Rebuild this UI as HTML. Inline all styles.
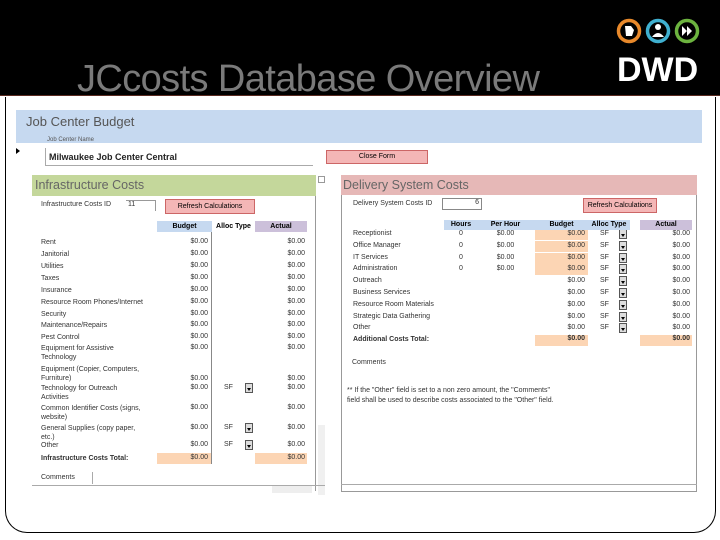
<!DOCTYPE html>
<html><head><meta charset="utf-8"><style>
*{margin:0;padding:0;box-sizing:border-box}
body{width:720px;height:540px;position:relative;background:#fff;font-family:"Liberation Sans",sans-serif;overflow:hidden}
.a{position:absolute;white-space:nowrap}
.s{font-size:7px;color:#333}
.r{text-align:right}
.c{text-align:center}
.dd{position:absolute;width:8px;height:10px;border:1px solid #555;background:#ddd}
.dd:after{content:"";position:absolute;left:1px;top:4px;border-left:2px solid transparent;border-right:2px solid transparent;border-top:3px solid #000}
</style></head><body>
<div class="a" style="left:0;top:0;width:720px;height:96px;background:#000;border-bottom:1px solid #5a2a20"></div>
<div class="a" style="left:77px;top:58px;font-size:38px;color:#7a7a7a;letter-spacing:-0.6px">JCcosts Database Overview</div>
<!-- logo -->
<svg class="a" style="left:616px;top:16px" width="86" height="68" viewBox="0 0 86 68">
<circle cx="13" cy="15" r="10.5" fill="none" stroke="#e8892b" stroke-width="3.5"/>
<circle cx="42" cy="15" r="10.5" fill="none" stroke="#3fb0d0" stroke-width="3.5"/>
<circle cx="71" cy="15" r="10.5" fill="none" stroke="#6cb33f" stroke-width="3.5"/>
<path d="M9 10h6l3 4-2 6h-6z" fill="#fff"/>
<circle cx="42" cy="11" r="3" fill="#fff"/><path d="M36 21q6-8 12 0z" fill="#fff"/>
<path d="M66 10l5 5-5 5zM71 10l5 5-5 5z" fill="#fff"/>
<text x="1" y="65" font-family="Liberation Sans" font-weight="bold" font-size="34" fill="#fff">DWD</text>
</svg>
<!-- frame -->
<div class="a" style="left:5px;top:97px;width:711px;height:436px;border-left:1px solid #000;border-bottom:1px solid #000;border-right:1px solid #000;border-radius:0 0 22px 22px;border-top:none"></div>
<div class="a" style="left:16px;top:110px;width:686px;height:33px;background:#c6d9f0"></div>
<div class="a" style="left:26px;top:114px;font-size:13px;color:#555">Job Center Budget</div>
<div class="a s" style="left:47px;top:137px;font-size:6px;color:#555">Job Center Name</div>
<div class="a" style="left:16px;top:148px;border-left:4px solid #000;border-top:3px solid transparent;border-bottom:3px solid transparent"></div>
<div class="a" style="left:45px;top:148px;width:268px;height:18px;border-left:1px solid #aaa;border-bottom:1px solid #aaa"></div>
<div class="a" style="left:49px;top:152px;font-size:9px;font-weight:bold;color:#222">Milwaukee Job Center Central</div>
<div class="a c" style="left:326px;top:150px;width:102px;height:14px;background:#f4b6b6;border:1px solid #c66;font-size:7px;line-height:12px">Close Form</div>
<!-- infrastructure -->
<div class="a" style="left:32px;top:175px;width:284px;height:316px;border-right:1px solid #999"></div>
<div class="a" style="left:32px;top:175px;width:284px;height:21px;background:#c4d79b"></div>
<div class="a" style="left:35px;top:178px;font-size:12.5px;color:#666">Infrastructure Costs</div>
<div class="a" style="left:318px;top:176px;width:7px;height:7px;border:1px solid #999"></div>
<div class="a s" style="left:41px;top:201px">Infrastructure Costs ID</div>
<div class="a s" style="left:126px;top:200px;width:30px;height:11px;border-top:1px solid #999;border-right:1px solid #999;padding-left:2px">11</div>
<div class="a c" style="left:165px;top:199px;width:90px;height:15px;background:#f4b6b6;border:1px solid #c66;font-size:7px;line-height:13px">Refresh Calculations</div>
<div class="a c" style="left:157px;top:221px;width:55px;height:11px;background:#c6d9f0;font-size:7px;font-weight:bold;line-height:11px">Budget</div>
<div class="a c" style="left:212px;top:221px;width:43px;height:11px;font-size:7px;font-weight:bold;line-height:11px">Alloc Type</div>
<div class="a c" style="left:255px;top:221px;width:52px;height:11px;background:#ccc0da;font-size:7px;font-weight:bold;line-height:11px">Actual</div>
<div class="a" style="left:211px;top:232px;width:1px;height:232px;background:#888"></div>
<div class="a" style="left:157px;top:453px;width:54px;height:11px;background:#fcd5b4"></div>
<div class="a" style="left:255px;top:453px;width:52px;height:11px;background:#fcd5b4"></div>
<div id="inf"></div>
<div class="a" style="left:318px;top:425px;width:7px;height:70px;background:#f0f0f0"></div>
<div class="a s" style="left:41px;top:474px">Comments</div>
<div class="a" style="left:92px;top:472px;width:1px;height:12px;background:#aaa"></div>
<div class="a" style="left:32px;top:485px;width:293px;height:8px;border-top:1px solid #aaa"></div>
<div class="a" style="left:272px;top:486px;width:40px;height:7px;background:#eee"></div>
<!-- delivery -->
<div class="a" style="left:341px;top:175px;width:356px;height:317px;border-left:1px solid #999;border-right:1px solid #999;border-bottom:1px solid #999"></div>
<div class="a" style="left:341px;top:175px;width:356px;height:20px;background:#e6b8b7"></div>
<div class="a" style="left:343px;top:178px;font-size:12.5px;color:#666">Delivery System Costs</div>
<div class="a s" style="left:353px;top:200px">Delivery System Costs ID</div>
<div class="a s r" style="left:442px;top:198px;width:40px;height:12px;border:1px solid #888;padding-right:2px">6</div>
<div class="a c" style="left:583px;top:198px;width:74px;height:15px;background:#f4b6b6;border:1px solid #c66;font-size:7px;line-height:13px">Refresh Calculations</div>
<div class="a" style="left:444px;top:220px;width:186px;height:10px;background:#c6d9f0"></div>
<div class="a c" style="left:444px;top:220px;width:34px;font-size:7px;font-weight:bold;line-height:10px">Hours</div>
<div class="a c" style="left:478px;top:220px;width:55px;font-size:7px;font-weight:bold;line-height:10px">Per Hour</div>
<div class="a c" style="left:535px;top:220px;width:53px;font-size:7px;font-weight:bold;line-height:10px">Budget</div>
<div class="a c" style="left:588px;top:220px;width:42px;font-size:7px;font-weight:bold;line-height:10px">Alloc Type</div>
<div class="a c" style="left:640px;top:220px;width:52px;height:10px;background:#ccc0da;font-size:7px;font-weight:bold;line-height:10px">Actual</div>
<div id="del"></div>
<div class="a s" style="left:352px;top:359px">Comments</div>
<div class="a s" style="left:347px;top:386px;line-height:10px">** If the "Other" field is set to a non zero amount, the "Comments"<br>field shall be used to describe costs associated to the "Other" field.</div>
<div class="a" style="left:341px;top:484px;width:356px;height:8px;border-top:1px solid #aaa"></div>
<script>
var h='';
var inf=[["Rent",238],["Janitorial",250],["Utilities",262],["Taxes",274],["Insurance",286],["Resource Room Phones/Internet",298],["Security",310],["Maintenance/Repairs",321],["Pest Control",333],["Equipment for Assistive<br>Technology",344,1],["Equipment (Copier, Computers,<br>Furniture)",365,1],["Technology for Outreach<br>Activities",384,1,1],["Common Identifier Costs (signs,<br>website)",404,1],["General Supplies (copy paper,<br>etc.)",424,1,1],["Other",441,0,1],["<b>Infrastructure Costs Total:</b>",454]];
inf.forEach(function(r,i){
 h+='<div class="a s" style="left:41px;top:'+r[1]+'px;line-height:9px">'+r[0]+'</div>';
 var vt=r[2]?r[1]+(r[0].indexOf('Equipment (')==0?10:0):r[1];
 h+='<div class="a s r" style="left:157px;top:'+vt+'px;width:51px">$0.00</div>';
 h+='<div class="a s r" style="left:255px;top:'+vt+'px;width:50px">$0.00</div>';
 if(r[3]){h+='<div class="a s" style="left:224px;top:'+vt+'px">SF</div><div class="dd" style="left:245px;top:'+(vt-1)+'px"></div>';}
});
var del=["Receptionist","Office Manager","IT Services","Administration","Outreach","Business Services","Resource Room Materials","Strategic Data Gathering","Other"];
del.forEach(function(n,i){
 var t=230+i*11.8;
 h+='<div class="a s" style="left:353px;top:'+t+'px">'+n+'</div>';
 if(i<4){h+='<div class="a s c" style="left:444px;top:'+t+'px;width:34px">0</div><div class="a s c" style="left:478px;top:'+t+'px;width:55px">$0.00</div><div class="a" style="left:535px;top:'+(t-1)+'px;width:53px;height:11px;background:#fcd5b4"></div>';}
 h+='<div class="a s r" style="left:535px;top:'+t+'px;width:50px">$0.00</div>';
 h+='<div class="a s" style="left:600px;top:'+t+'px">SF</div><div class="dd" style="left:619px;top:'+(t-1)+'px"></div>';
 h+='<div class="a s r" style="left:640px;top:'+t+'px;width:50px">$0.00</div>';
});
var tt=230+9*11.8;
h+='<div class="a s" style="left:353px;top:'+tt+'px;font-weight:bold">Additional Costs Total:</div>';
h+='<div class="a s r" style="left:535px;top:'+(tt-1)+'px;width:53px;height:11px;background:#fcd5b4;font-weight:bold;padding-right:3px">$0.00</div>';
h+='<div class="a s r" style="left:640px;top:'+(tt-1)+'px;width:52px;height:11px;background:#fcd5b4;font-weight:bold;padding-right:2px">$0.00</div>';
document.getElementById('inf').innerHTML=h;
</script>
</body></html>
